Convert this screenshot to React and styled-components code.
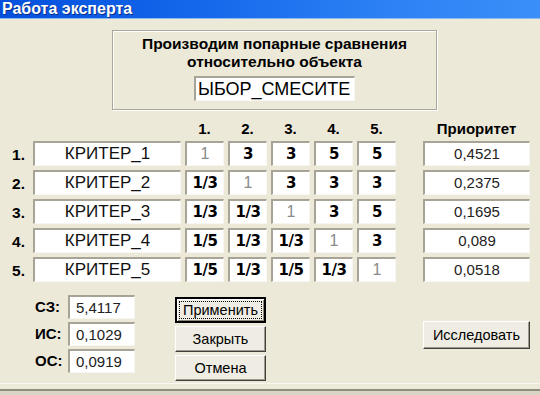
import React from "react";
import styled, { createGlobalStyle, css } from "styled-components";

const Global = createGlobalStyle`
  html, body { margin: 0; padding: 0; background: #ECE9D8; }
  body { font-family: "Liberation Sans", Arial, sans-serif; }
`;

const Window = styled.div`
  width: 540px;
  height: 395px;
  background: #ECE9D8;
  display: flex;
  flex-direction: column;
  overflow: hidden;
`;

const TitleBar = styled.div`
  height: 18px;
  flex: none;
  background: linear-gradient(to right, #0450DC 0%, #1466EA 35%, #2C80F4 70%, #3B8FF8 100%);
  border-bottom: 1px solid #8DB8F2;
  color: #fff;
  font-family: "Liberation Sans", Arial, sans-serif;
  font-weight: bold;
  font-size: 16px;
  line-height: 17px;
  padding-left: 2px;
  text-shadow: 1px 1px 0 #0A2E8A;
`;

const FrameBottom = styled.div`
  margin-top: auto;
  flex: none;
  height: 5px;
  border-top: 1px solid #F8F7F2;
  border-bottom: 2px solid #8F8C80;
  background: #ECE9D8;
`;

const FrameEdge = styled.div`
  flex: none;
  height: 4px;
  background: #D9D5C5;
`;

const Body = styled.div`
  display: flex;
  flex-direction: column;
`;

const GroupBox = styled.div`
  margin: 11px 0 0 112px;
  width: 325px;
  height: 80px;
  box-sizing: border-box;
  border: 1px solid #ACA899;
  box-shadow: inset 1px 1px 0 #fff, 1px 1px 0 #fff;
  display: flex;
  flex-direction: column;
  align-items: center;
  padding-top: 4px;
`;

const Heading = styled.div`
  font-family: "Liberation Sans", Arial, sans-serif;
  font-weight: bold;
  font-size: 15.5px;
  line-height: 18px;
  color: #000;
  text-align: center;
`;

const sunken = css`
  box-sizing: border-box;
  background: #fff;
  border-style: solid;
  border-width: 2px 1px 1px 2px;
  border-color: #A7A497 #F7F6F0 #F7F6F0 #A7A497;
`;

const ObjectField = styled.div`
  ${sunken};
  margin-top: 5px;
  width: 161px;
  height: 25px;
  font-size: 18px;
  line-height: 22px;
  padding-left: 2px;
  color: #000;
  white-space: nowrap;
  overflow: hidden;
`;

const Matrix = styled.div`
  margin-top: 11px;
  display: grid;
  grid-template-columns: 29px 148px repeat(5, 39px) 19px 107px;
  grid-auto-rows: 25px;
  grid-template-rows: 16px;
  column-gap: 4px;
  row-gap: 4px;
`;

const ColHead = styled.div`
  grid-column: ${(p) => p.$col};
  font-weight: bold;
  font-size: 15px;
  line-height: 16px;
  text-align: center;
  color: #000;
`;

const RowLabel = styled.div`
  grid-column: 1;
  font-weight: bold;
  font-size: 15.5px;
  line-height: 25px;
  padding-left: 12px;
  padding-top: 1px;
  color: #000;
`;

const NameCell = styled.div`
  ${sunken};
  grid-column: 2;
  font-size: 17px;
  line-height: 22px;
  text-align: center;
  color: #111;
`;

const ValueCell = styled.div`
  ${sunken};
  grid-column: ${(p) => p.$col};
  font-family: "DejaVu Sans", Verdana, sans-serif;
  font-weight: bold;
  font-size: 15px;
  line-height: 22px;
  text-align: center;
  color: #000;
  letter-spacing: -0.5px;
  ${(p) =>
    p.$diag &&
    css`
      color: #8A8A8A;
      font-family: "Liberation Sans", Arial, sans-serif;
      font-weight: normal;
      font-size: 16px;
      letter-spacing: 0;
    `}
`;

const PriorityCell = styled.div`
  ${sunken};
  grid-column: 9;
  font-size: 15px;
  line-height: 22px;
  text-align: center;
  color: #222;
`;

const Footer = styled.div`
  margin-top: 13px;
  display: flex;
  align-items: flex-start;
`;

const Stats = styled.div`
  margin-left: 35px;
  display: grid;
  grid-template-columns: 33px 67px;
  grid-auto-rows: 24px;
  row-gap: 3px;
`;

const StatLabel = styled.div`
  font-weight: bold;
  font-size: 15px;
  line-height: 24px;
  color: #000;
`;

const StatValue = styled.div`
  ${sunken};
  font-size: 15px;
  line-height: 21px;
  padding-left: 6px;
  color: #222;
`;

const Buttons = styled.div`
  margin: 2px 0 0 40px;
  display: flex;
  flex-direction: column;
  gap: 3px;
`;

const Button = styled.button`
  box-sizing: border-box;
  width: ${(p) => p.$w || 91}px;
  height: 26px;
  padding: 0;
  background: #EFEDE3;
  font-family: "Liberation Sans", Arial, sans-serif;
  font-size: 14.5px;
  color: #000;
  border-style: solid;
  border-width: 1px;
  border-color: #fff #404040 #404040 #fff;
  box-shadow: inset -1px -1px 0 #9D9A8C;
  position: relative;
  ${(p) =>
    p.$default &&
    css`
      border: 2px solid #000;
      box-shadow: inset 1px 1px 0 #fff, inset -1px -1px 0 #8A877A;
      &::after {
        content: "";
        position: absolute;
        inset: 2px;
        border: 1px dotted #000;
      }
    `}
`;

const Explore = styled(Button)`
  margin: 26px 10px 0 auto;
  height: 28px;
`;

const names = ["КРИТЕР_1", "КРИТЕР_2", "КРИТЕР_3", "КРИТЕР_4", "КРИТЕР_5"];
const matrix = [
  ["1", "3", "3", "5", "5"],
  ["1/3", "1", "3", "3", "3"],
  ["1/3", "1/3", "1", "3", "5"],
  ["1/5", "1/3", "1/3", "1", "3"],
  ["1/5", "1/3", "1/5", "1/3", "1"],
];
const priorities = ["0,4521", "0,2375", "0,1695", "0,089", "0,0518"];

export default function App() {
  return (
    <>
      <Global />
      <Window>
        <TitleBar>Работа эксперта</TitleBar>
        <Body>
          <GroupBox>
            <Heading>Производим попарные сравнения</Heading>
            <Heading>относительно объекта</Heading>
            <ObjectField>ЫБОР_СМЕСИТЕ</ObjectField>
          </GroupBox>
          <Matrix>
            {[1, 2, 3, 4, 5].map((n) => (
              <ColHead key={n} $col={n + 2}>{n}.</ColHead>
            ))}
            <ColHead $col={9}>Приоритет</ColHead>
            {names.map((name, r) => (
              <React.Fragment key={name}>
                <RowLabel>{r + 1}.</RowLabel>
                <NameCell>{name}</NameCell>
                {matrix[r].map((v, c) => (
                  <ValueCell key={c} $col={c + 3} $diag={r === c}>{v}</ValueCell>
                ))}
                <PriorityCell>{priorities[r]}</PriorityCell>
              </React.Fragment>
            ))}
          </Matrix>
          <Footer>
            <Stats>
              <StatLabel>СЗ:</StatLabel>
              <StatValue>5,4117</StatValue>
              <StatLabel>ИС:</StatLabel>
              <StatValue>0,1029</StatValue>
              <StatLabel>ОС:</StatLabel>
              <StatValue>0,0919</StatValue>
            </Stats>
            <Buttons>
              <Button $default>Применить</Button>
              <Button>Закрыть</Button>
              <Button>Отмена</Button>
            </Buttons>
            <Explore $w={107}>Исследовать</Explore>
          </Footer>
        </Body>
        <FrameBottom />
        <FrameEdge />
      </Window>
    </>
  );
}
